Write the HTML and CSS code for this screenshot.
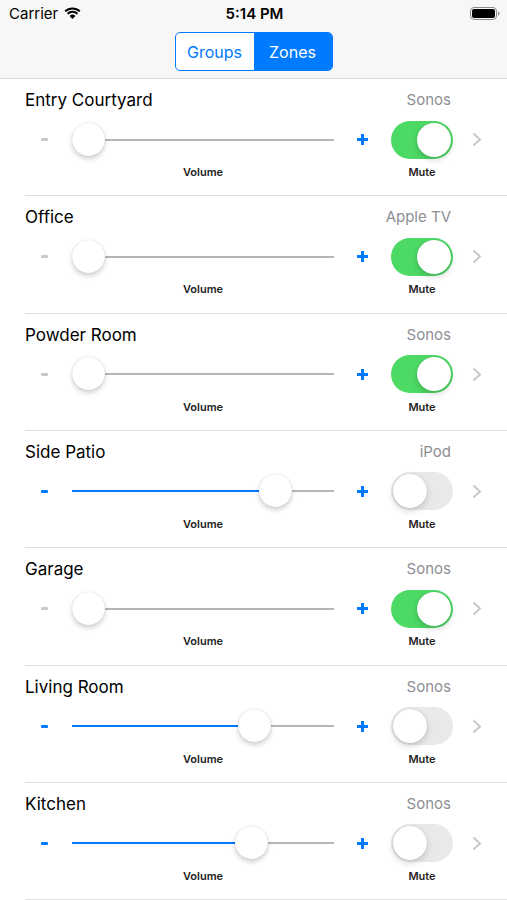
FILE: index.html
```html
<!DOCTYPE html>
<html>
<head>
<meta charset="utf-8">
<link rel="stylesheet" href="styles.css">
</head>
<body>
<header class="nav">
  <div class="status">
    <div class="status-left">
      <span class="carrier">Carrier</span>
      <svg class="wifi" width="17" height="12" viewBox="0 0 17 12">
        <path d="M8.5 12 L5.6 8.9 A4.2 4.2 0 0 1 11.4 8.9 Z" fill="#000"/>
        <path d="M3.6 6.8 A7.1 7.1 0 0 1 13.4 6.8" stroke="#000" stroke-width="2" fill="none"/>
        <path d="M1.2 4.3 A10.6 10.6 0 0 1 15.8 4.3" stroke="#000" stroke-width="2" fill="none"/>
      </svg>
    </div>
    <div class="time">5:14 PM</div>
    <div class="status-right">
      <svg class="battery" width="30" height="13" viewBox="0 0 30 13">
        <rect x="0.5" y="0.5" width="26" height="12" rx="3.5" fill="none" stroke="#8a8a8a" stroke-width="1"/>
        <rect x="2" y="2" width="23" height="9" rx="2" fill="#000"/>
        <path d="M28 4.5 Q29.5 4.5 29.5 6.5 Q29.5 8.5 28 8.5 Z" fill="#8a8a8a"/>
      </svg>
    </div>
  </div>
  <div class="seg-wrap">
    <div class="segmented">
      <span class="seg">Groups</span>
      <span class="seg active">Zones</span>
    </div>
  </div>
</header>

<ul class="list">
  <li class="row">
    <div class="title">Entry Courtyard</div><div class="device">Sonos</div>
    <span class="minus zero"></span>
    <div class="slider" style="--v:0"><div class="fill"></div><div class="thumb"></div></div>
    <span class="plus"></span>
    <div class="switch on"><div class="knob"></div></div>
    <svg class="chev" width="10" height="15" viewBox="0 0 10 15"><path d="M1.5 1.5 L8 7.5 L1.5 13.5" fill="none" stroke="#c7c7cc" stroke-width="2"/></svg>
    <div class="lab vol">Volume</div><div class="lab mute">Mute</div>
  </li>
  <li class="row">
    <div class="title">Office</div><div class="device">Apple TV</div>
    <span class="minus zero"></span>
    <div class="slider" style="--v:0"><div class="fill"></div><div class="thumb"></div></div>
    <span class="plus"></span>
    <div class="switch on"><div class="knob"></div></div>
    <svg class="chev" width="10" height="15" viewBox="0 0 10 15"><path d="M1.5 1.5 L8 7.5 L1.5 13.5" fill="none" stroke="#c7c7cc" stroke-width="2"/></svg>
    <div class="lab vol">Volume</div><div class="lab mute">Mute</div>
  </li>
  <li class="row">
    <div class="title">Powder Room</div><div class="device">Sonos</div>
    <span class="minus zero"></span>
    <div class="slider" style="--v:0"><div class="fill"></div><div class="thumb"></div></div>
    <span class="plus"></span>
    <div class="switch on"><div class="knob"></div></div>
    <svg class="chev" width="10" height="15" viewBox="0 0 10 15"><path d="M1.5 1.5 L8 7.5 L1.5 13.5" fill="none" stroke="#c7c7cc" stroke-width="2"/></svg>
    <div class="lab vol">Volume</div><div class="lab mute">Mute</div>
  </li>
  <li class="row">
    <div class="title">Side Patio</div><div class="device">iPod</div>
    <span class="minus"></span>
    <div class="slider" style="--v:0.815"><div class="fill"></div><div class="thumb"></div></div>
    <span class="plus"></span>
    <div class="switch"><div class="knob"></div></div>
    <svg class="chev" width="10" height="15" viewBox="0 0 10 15"><path d="M1.5 1.5 L8 7.5 L1.5 13.5" fill="none" stroke="#c7c7cc" stroke-width="2"/></svg>
    <div class="lab vol">Volume</div><div class="lab mute">Mute</div>
  </li>
  <li class="row">
    <div class="title">Garage</div><div class="device">Sonos</div>
    <span class="minus zero"></span>
    <div class="slider" style="--v:0"><div class="fill"></div><div class="thumb"></div></div>
    <span class="plus"></span>
    <div class="switch on"><div class="knob"></div></div>
    <svg class="chev" width="10" height="15" viewBox="0 0 10 15"><path d="M1.5 1.5 L8 7.5 L1.5 13.5" fill="none" stroke="#c7c7cc" stroke-width="2"/></svg>
    <div class="lab vol">Volume</div><div class="lab mute">Mute</div>
  </li>
  <li class="row">
    <div class="title">Living Room</div><div class="device">Sonos</div>
    <span class="minus"></span>
    <div class="slider" style="--v:0.727"><div class="fill"></div><div class="thumb"></div></div>
    <span class="plus"></span>
    <div class="switch"><div class="knob"></div></div>
    <svg class="chev" width="10" height="15" viewBox="0 0 10 15"><path d="M1.5 1.5 L8 7.5 L1.5 13.5" fill="none" stroke="#c7c7cc" stroke-width="2"/></svg>
    <div class="lab vol">Volume</div><div class="lab mute">Mute</div>
  </li>
  <li class="row">
    <div class="title">Kitchen</div><div class="device">Sonos</div>
    <span class="minus"></span>
    <div class="slider" style="--v:0.712"><div class="fill"></div><div class="thumb"></div></div>
    <span class="plus"></span>
    <div class="switch"><div class="knob"></div></div>
    <svg class="chev" width="10" height="15" viewBox="0 0 10 15"><path d="M1.5 1.5 L8 7.5 L1.5 13.5" fill="none" stroke="#c7c7cc" stroke-width="2"/></svg>
    <div class="lab vol">Volume</div><div class="lab mute">Mute</div>
  </li>
</ul>
</body>
</html>
```

FILE: styles.css
```css
* { box-sizing: border-box; }
html, body {
  margin: 0;
  padding: 0;
  background: #fff;
  font-family: "Inter", "Roboto", "Liberation Sans", sans-serif;
  color: #000;
}
.nav {
  height: 79px;
  background: #f7f7f7;
  border-bottom: 1px solid #dadada;
}
.status {
  height: 27px;
  display: grid;
  grid-template-columns: 1fr auto 1fr;
  align-items: center;
  padding: 0 7px 0 9px;
}
.status-left {
  display: flex;
  align-items: center;
  gap: 6px;
}
.carrier {
  font-size: 15px;
}
.wifi { margin-top: -2px; }
.time {
  font-size: 15px;
  font-weight: 600;
}
.status-right {
  display: flex;
  justify-content: flex-end;
}
.seg-wrap {
  display: flex;
  justify-content: center;
  padding-top: 5px;
}
.segmented {
  display: flex;
  width: 158px;
  height: 39px;
  border: 1px solid #007aff;
  border-radius: 5px;
  overflow: hidden;
  background: #fff;
}
.seg {
  flex: 1;
  display: flex;
  align-items: center;
  justify-content: center;
  font-size: 16px;
  color: #007aff;
}
.seg.active {
  background: #007aff;
  color: #fff;
}
.list {
  list-style: none;
  margin: 0;
  padding: 0;
}
.row {
  display: grid;
  grid-template-columns: 47px 262px 57px 62px 1fr;
  grid-template-rows: 22px 48px 20px;
  padding: 10px 0 0 25px;
  position: relative;
  height: 117.33px;
}
.row::after {
  content: "";
  position: absolute;
  left: 25px;
  right: 0;
  bottom: 0;
  height: 1px;
  background: #e0e0e0;
}
.title {
  grid-column: 1 / 3;
  grid-row: 1;
  font-size: 17px;
  line-height: 22px;
}
.device {
  grid-column: 3 / 5;
  grid-row: 1;
  justify-self: end;
  font-size: 15px;
  line-height: 22px;
  color: #8e8e93;
  padding-right: 2px;
}
.minus, .slider, .plus, .switch, .chev {
  grid-row: 2;
  margin-top: 9px;
}
.minus {
  grid-column: 1;
  align-self: center;
  justify-self: start;
  margin-left: 16px;
  width: 7px;
  height: 3px;
  background: #007aff;
  border-radius: 1px;
}
.minus.zero { background: #c9c9c9; }
.slider {
  grid-column: 2;
  position: relative;
  height: 38px;
  align-self: center;
  background: linear-gradient(#b6b6b6, #b6b6b6) no-repeat;
  background-size: 100% 2px;
  background-position: 0 50%;
}
.fill {
  position: absolute;
  left: 0;
  top: 18px;
  height: 2px;
  width: calc(16.5px + var(--v) * (100% - 33px));
  background: #007aff;
}
.thumb {
  position: absolute;
  top: 2px;
  left: calc(var(--v) * (100% - 33px));
  width: 33px;
  height: 33px;
  border-radius: 50%;
  background: #fff;
  box-shadow: 0 3px 5px rgba(0,0,0,0.18), 0 0 1px rgba(0,0,0,0.25);
}
.plus {
  grid-column: 3;
  align-self: center;
  justify-self: center;
  width: 11px;
  height: 11px;
  background:
    linear-gradient(#007aff, #007aff) center / 11px 3px no-repeat,
    linear-gradient(#007aff, #007aff) center / 3px 11px no-repeat;
}
.switch {
  grid-column: 4;
  align-self: center;
  width: 62px;
  height: 38px;
  border-radius: 19px;
  background: #e9e9ea;
  position: relative;
}
.switch.on { background: #4cd964; }
.knob {
  position: absolute;
  top: 2px;
  left: 2px;
  width: 34px;
  height: 34px;
  border-radius: 50%;
  background: #fff;
  box-shadow: 0 3px 6px rgba(0,0,0,0.16), 0 0 1px rgba(0,0,0,0.2);
}
.switch.on .knob { left: 26px; }
.chev {
  grid-column: 5;
  align-self: center;
  margin-left: 19px;
}
.lab {
  grid-row: 3;
  justify-self: center;
  align-self: end;
  font-size: 11px;
  line-height: 14px;
  font-weight: 600;
  color: #222;
}
.vol { grid-column: 2; }
.mute { grid-column: 4; }
```
